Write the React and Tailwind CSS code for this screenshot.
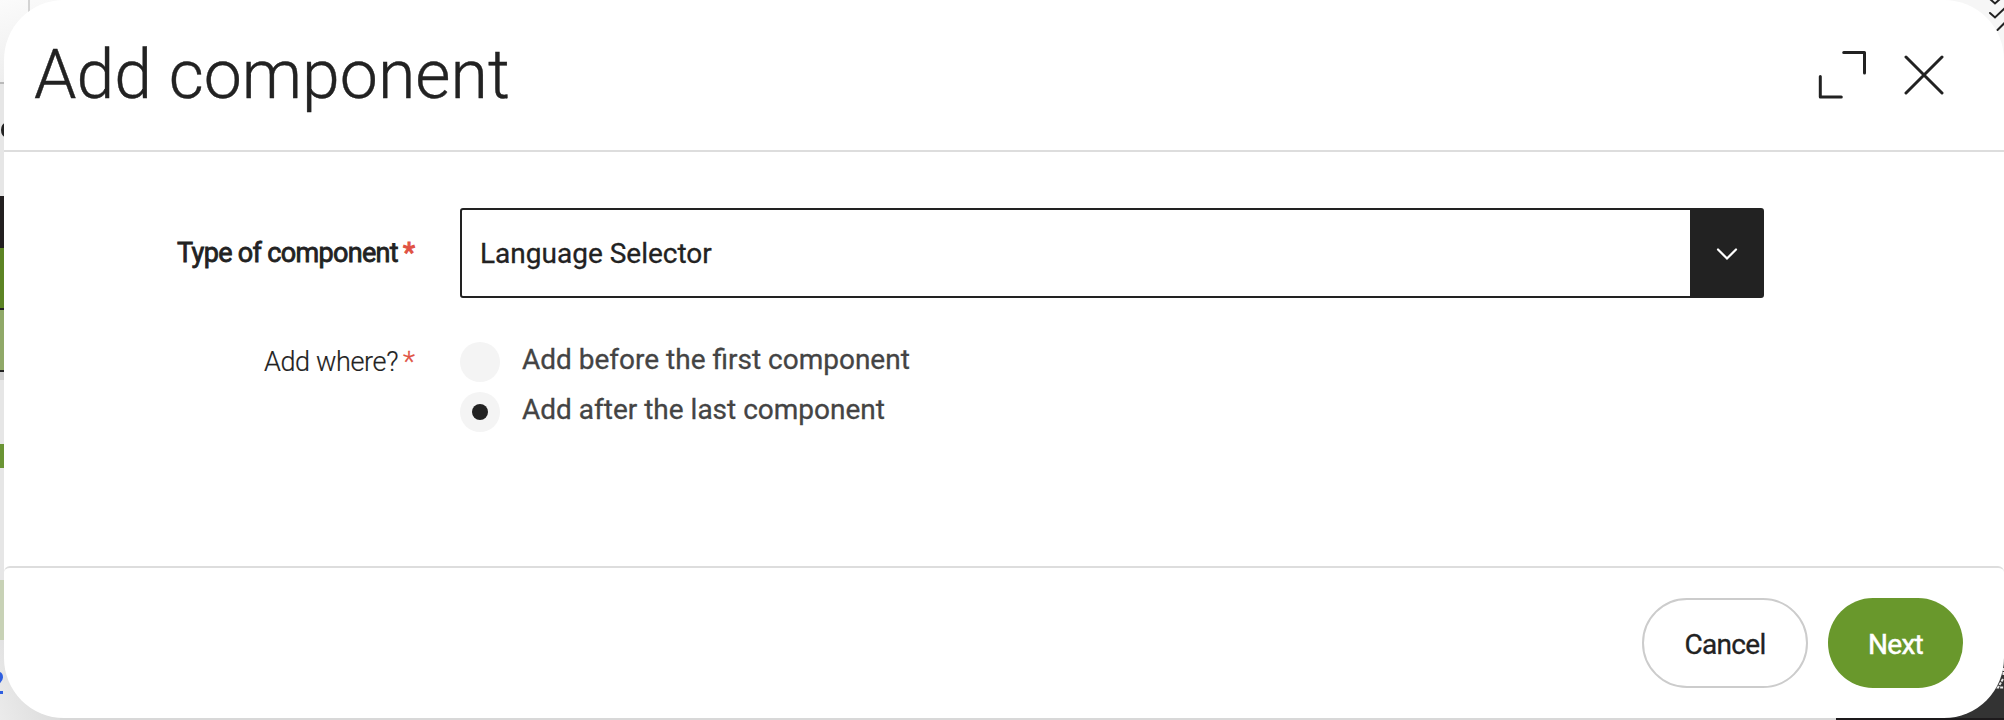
const Backdrop = () => (
  <svg className="absolute inset-0 h-[720px] w-[2004px]" viewBox="0 0 2004 720" aria-hidden="true">
    <defs>
      <linearGradient id="corner" x1="0" y1="0" x2="0.5" y2="1">
        <stop offset="0" stopColor="#fbfbfb" />
        <stop offset="1" stopColor="#ebebeb" />
      </linearGradient>
      <linearGradient id="foot" x1="0" y1="1" x2="1" y2="0.6">
        <stop offset="0" stopColor="#ebebeb" />
        <stop offset="1" stopColor="#d4d4d4" />
      </linearGradient>
    </defs>
    <rect width="2004" height="720" fill="#e6e6e6" />
    <rect width="120" height="82" fill="url(#corner)" />
    <rect x="28" width="2" height="14" fill="#d4d4d4" />
    <rect y="82" width="6" height="2" fill="#b9b9b9" />
    <ellipse cx="5.500" cy="130" rx="4.500" ry="7" fill="#222" />
    <rect y="196" width="6" height="52" fill="#221f20" />
    <rect y="248" width="6" height="60" fill="#5c8424" />
    <rect y="308" width="6" height="2" fill="#222" />
    <rect y="310" width="6" height="60" fill="#90a968" />
    <rect y="370" width="6" height="2" fill="#222" />
    <rect y="372" width="6" height="8" fill="#cfcfcf" />
    <rect y="444" width="6" height="24" fill="#6a9434" />
    <rect y="580" width="6" height="60" fill="#c8d2b6" />
    <rect y="640" width="80" height="80" fill="url(#foot)" />
    <path d="M-3 673Q1.500 673 1.500 677.500Q1.500 680 -3 684" stroke="#2f5fe0" strokeWidth="3" fill="none" />
    <rect y="691" width="3" height="3" fill="#2f5fe0" />
    <rect x="1900" width="104" height="80" fill="#f6f6f6" />
    <path d="M1990 -1L1995 3.500L2000 -1M1990 13L1995 17.500L2005 8M1997.500 30L2005 22.500" stroke="#222" strokeWidth="2" fill="none" strokeLinecap="round" />
    <rect y="718" width="1836" height="2" x="60" fill="#d8d8d8" />
    <rect x="1900" y="640" width="104" height="80" fill="#333" />
    <path d="M2003.500 668V675M2003 679L1998 687.500H2005" stroke="#e8e8e8" strokeWidth="2" strokeDasharray="3 1" fill="none" />
    <rect x="1836" y="718" width="168" height="2" fill="#1d1a1c" />
  </svg>
);

const Required = ({ className = "" }) => <span className={`ml-[5px] text-[28px] text-[#e05244] ${className}`}>*</span>;

const Radio = ({ checked, label }) => (
  <label className="flex h-10 items-center">
    <span className="flex size-10 items-center justify-center rounded-full bg-[#f4f4f4]">
      {checked && <span className="size-4 rounded-full bg-[#222]" />}
    </span>
    <span className="-mt-1 ml-[22px] whitespace-nowrap text-[28px] leading-10 text-[#444] [-webkit-text-stroke:0.3px]">{label}</span>
  </label>
);

export default function App() {
  return (
    <div className="relative h-[720px] w-[2004px] overflow-hidden font-[Roboto,sans-serif] text-[#222]">
      <Backdrop />
      <div className="relative ml-1 flex h-[718px] w-[2000px] flex-col overflow-hidden rounded-[60px] bg-white">
        <header className="flex h-[152px] items-center justify-between border-b-2 border-[#ddd] pl-[30px] pr-[60px]">
          <h1 className="whitespace-nowrap text-[68px] font-light leading-[80px] [-webkit-text-stroke:0.4px]">Add component</h1>
          <div className="flex items-center gap-[38px]">
            <svg className="h-12 w-12" viewBox="0 0 48 48" fill="none" stroke="#222" strokeWidth="3" strokeLinecap="round" strokeLinejoin="round">
              <path d="M25.700 1.500H46.500V22M2.300 25.500V46H23.300" />
            </svg>
            <svg className="h-10 w-10" viewBox="0 0 40 40" fill="none" stroke="#222" strokeWidth="3" strokeLinecap="round">
              <path d="M2 2L38 38M38 2L2 38" />
            </svg>
          </div>
        </header>

        <main className="flex h-[414px] flex-col pt-14">
          <div className="flex h-[90px] items-center">
            <div className="flex w-[411px] justify-end whitespace-nowrap text-[27px] leading-8">
              <span className="tracking-[-0.025em] [-webkit-text-stroke:0.8px]">Type of component</span>
              <Required className="leading-8 [-webkit-text-stroke:1px]" />
            </div>
            <div className="ml-[45px] flex h-[90px] w-[1304px] rounded-[3px] border-2 border-[#222]">
              <span className="flex-1 whitespace-nowrap pl-[18px] pt-px text-[28px] leading-[86px] [-webkit-text-stroke:0.3px]">Language Selector</span>
              <span className="flex w-[72px] items-center justify-center bg-[#222]">
                <svg className="h-5 w-6" viewBox="0 0 24 20" fill="none" stroke="#fff" strokeWidth="2.200" strokeLinecap="round">
                  <path d="M4 6.500L13 15.500L22 6.500" />
                </svg>
              </span>
            </div>
          </div>
          <div className="mt-11 flex">
            <div className="flex w-[411px] justify-end whitespace-nowrap text-[27px] font-light leading-10">
              <span className="tracking-[-0.013em] [-webkit-text-stroke:0.2px]">Add where?</span>
              <Required className="leading-10 [-webkit-text-stroke:0.3px]" />
            </div>
            <div className="ml-[45px] flex flex-col gap-[10px]">
              <Radio label="Add before the first component" />
              <Radio label="Add after the last component" checked />
            </div>
          </div>
        </main>

        <footer className="flex flex-1 justify-end gap-5 rounded-t-md border-t-2 border-[#ddd] pr-[41px] pt-[30px]">
          <button className="h-[90px] w-[166px] rounded-full border-2 border-[#ccc] pt-1 text-[28px] leading-none tracking-[-0.025em] [-webkit-text-stroke:0.3px]">Cancel</button>
          <button className="h-[90px] w-[135px] rounded-full bg-[#69982c] pt-1 text-[28px] leading-none tracking-[-0.025em] text-white [-webkit-text-stroke:0.5px]">Next</button>
        </footer>
      </div>
    </div>
  );
}
